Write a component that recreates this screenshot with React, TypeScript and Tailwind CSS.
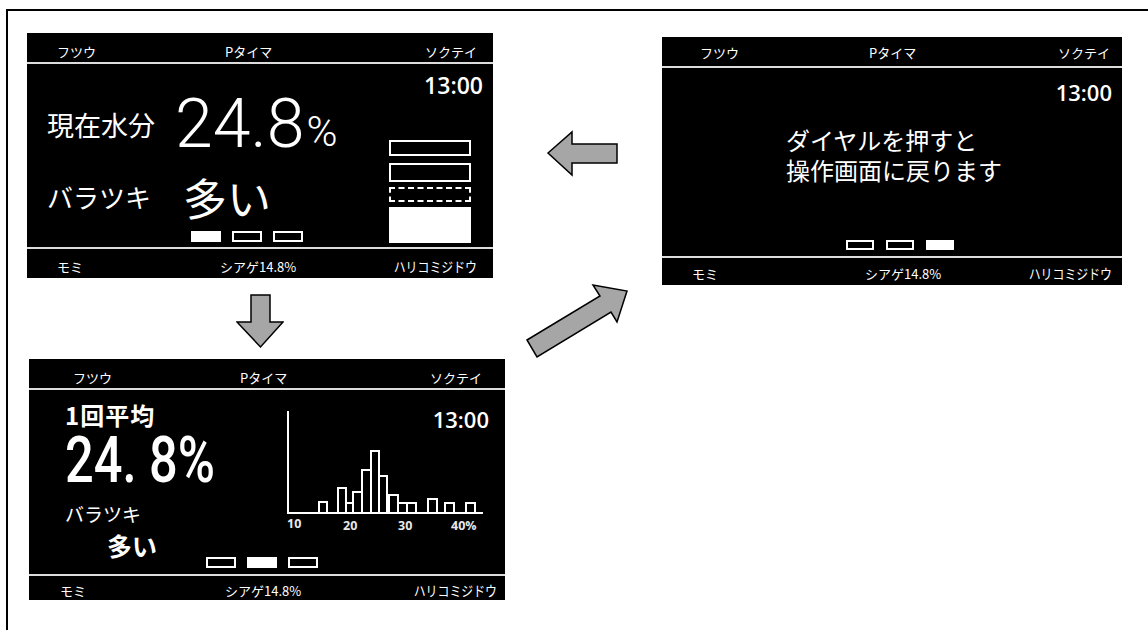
import type { ReactNode } from "react";

const jp = "font-['Noto_Sans_CJK_JP',sans-serif]";

type StripProps = {
  left: ReactNode;
  center: ReactNode;
  right: ReactNode;
  className: string;
  leftClass: string;
};

const Strip = ({ left, center, right, className, leftClass }: StripProps) => (
  <div className={`flex shrink-0 items-start border-[#dcdcdc] text-[13px] leading-[19px] text-white ${className}`}>
    <span className={leftClass}>{left}</span>
    <span>{center}</span>
    <span className="ml-auto">{right}</span>
  </div>
);

// ハリコミジドウ is set in a narrow face on the device
const Narrow = () => <span className="inline-block origin-right scale-x-[0.85] text-[14px]">ハリコミジドウ</span>;

const Boxes = ({ active, box, gap }: { active: number; box: string; gap: string }) => (
  <div className={`flex ${gap}`}>
    {[0, 1, 2].map((i) => (
      <div key={i} className={`${box} border-2 border-white ${i === active ? "bg-white" : ""}`} />
    ))}
  </div>
);

const Panel1 = () => (
  <div className="flex h-[245px] w-[466px] shrink-0 flex-col bg-black text-white">
    <Strip
      className="h-[31px] border-b-2 pl-[30px] pr-[16px] pt-[9px]"
      leftClass="w-[168px]"
      left="フツウ"
      center="Pタイマ"
      right="ソクテイ"
    />
    <div className="flex flex-1">
      <div className="flex flex-1 flex-col pl-[20px] pt-[26px]">
        <div className="flex items-end">
          <span className="mb-[20px] text-[27px] leading-none">現在水分</span>
          <span className="ml-[20px] font-['Roboto',sans-serif] text-[68px] font-light leading-none">24.8</span>
          <span className="mb-[5px] ml-[2px] font-['Roboto',sans-serif] text-[42px] font-light leading-none">%</span>
        </div>
        <div className="mt-[17px] flex items-end">
          <span className="mb-[9px] text-[26px] leading-none">バラツキ</span>
          <span className="ml-[32px] text-[44px] leading-none">多い</span>
        </div>
        <div className="ml-[144px] mt-[12px]">
          <Boxes active={0} box="h-[11px] w-[30px]" gap="gap-[11px]" />
        </div>
      </div>
      <div className="flex flex-col items-end pr-[10px] pt-[10px]">
        <span className="font-['Open_Sans',sans-serif] text-[23px] font-semibold leading-none">13:00</span>
        <div className="mr-[12px] mt-[43px] flex w-[82px] flex-col">
          <div className="h-[16px] border-2 border-white" />
          <div className="mt-[7px] h-[19px] border-2 border-white" />
          <div className="mt-[5px] h-[15px] border-2 border-dashed border-white" />
          <div className="mt-[5px] h-[36px] bg-white" />
        </div>
      </div>
    </div>
    <Strip
      className="h-[31px] border-t-2 pl-[30px] pr-[16px] pt-[8px]"
      leftClass="w-[163px]"
      left="モミ"
      center="シアゲ14.8%"
      right={<Narrow />}
    />
  </div>
);

// [left edge, right edge, top] in chart coordinates, baseline at 108
const bars: [number, number, number][] = [
  [34, 42, 97],
  [53, 61, 83],
  [61, 68, 98],
  [68, 77, 87],
  [77, 86, 65],
  [86, 94, 46],
  [94, 102, 71],
  [104, 113, 90],
  [113, 122, 98],
  [122, 131, 98],
  [143, 152, 94],
  [160, 169, 98],
  [181, 190, 98],
];

const Histogram = () => (
  <svg width="200" height="132" viewBox="0 0 200 132">
    {bars.map(([l, r, t], i) => (
      <rect key={i} x={l} y={t} width={r - l} height={108 - t} fill="none" stroke="#fff" strokeWidth="2" />
    ))}
    <path d="M3 6V108H198" fill="none" stroke="#fff" strokeWidth="2" />
    <g fill="#e8e8e8" fontFamily="Open Sans, sans-serif" fontSize="12.5" fontWeight="700">
      <text x="2" y="123">10</text>
      <text x="58" y="125">20</text>
      <text x="113" y="125">30</text>
      <text x="166" y="125">40%</text>
    </g>
  </svg>
);

const Panel2 = () => (
  <div className="ml-[2px] flex h-[241px] w-[476px] shrink-0 flex-col bg-black text-white">
    <Strip
      className="h-[31px] border-b-2 pl-[44px] pr-[23px] pt-[9px]"
      leftClass="w-[167px]"
      left="フツウ"
      center="Pタイマ"
      right="ソクテイ"
    />
    <div className="flex flex-1">
      <div className="flex w-[256px] shrink-0 flex-col pl-[36px] pt-[13px]">
        <span className="text-[24px] font-bold leading-none tracking-[1px]">1回平均</span>
        <span className="mt-[8px] inline-block origin-left scale-x-[0.79] font-['Roboto',sans-serif] text-[64px] font-medium leading-[52px]">
          24. 8%
        </span>
        <span className="mt-[17px] text-[19px] leading-none">バラツキ</span>
        <div className="flex items-start">
          <span className="ml-[42px] mt-[10px] shrink-0 text-[25px] font-bold leading-none">多い</span>
          <div className="ml-[49px] mt-[34px] shrink-0">
            <Boxes active={1} box="h-[11px] w-[30px]" gap="gap-[11px]" />
          </div>
        </div>
      </div>
      <div className="relative flex-1 pt-[15px]">
        <Histogram />
        <span className="absolute right-[16px] top-[18px] font-['Open_Sans',sans-serif] text-[22px] font-semibold leading-none">
          13:00
        </span>
      </div>
    </div>
    <Strip
      className="h-[26px] border-t-2 pl-[31px] pr-[8px] pt-[5px]"
      leftClass="w-[165px]"
      left="モミ"
      center="シアゲ14.8%"
      right={<Narrow />}
    />
  </div>
);

const Panel3 = () => (
  <div className="flex h-[248px] w-[460px] shrink-0 flex-col bg-black text-white">
    <Strip
      className="h-[31px] border-b-2 pl-[38px] pr-[12px] pt-[6px]"
      leftClass="w-[169px]"
      left="フツウ"
      center="Pタイマ"
      right="ソクテイ"
    />
    <div className="flex flex-1 flex-col">
      <span className="mr-[10px] mt-[13px] self-end font-['Open_Sans',sans-serif] text-[22px] font-semibold leading-none">
        13:00
      </span>
      <div className="ml-[124px] mt-[22px] text-[24px] leading-[30px]">
        <p className="h-[30px]">ダイヤルを押すと</p>
        <p className="h-[30px]">操作画面に戻ります</p>
      </div>
      <div className="ml-[184px] mt-[55px]">
        <Boxes active={2} box="h-[10px] w-[28px]" gap="gap-[12px]" />
      </div>
    </div>
    <Strip
      className="h-[29px] border-t-2 pl-[30px] pr-[10px] pt-[6px]"
      leftClass="w-[173px]"
      left="モミ"
      center="シアゲ14.8%"
      right={<Narrow />}
    />
  </div>
);

const DownArrow = () => (
  <svg className="ml-[209px] shrink-0" width="48" height="81" viewBox="0 0 48 81">
    <polygon
      points="15,17 34,17 34,44 47,44 24.5,69 1,44 15,44"
      fill="#a6a6a6"
      stroke="#000"
      strokeWidth="1.5"
      strokeLinejoin="miter"
    />
  </svg>
);

const MidArrows = () => (
  <svg className="shrink-0" width="157" height="360" viewBox="0 0 157 360">
    <polygon
      points="43,142 67,121 67,133 112,133 112,152 67,152 67,164"
      fill="#a6a6a6"
      stroke="#000"
      strokeWidth="1.5"
    />
    <polygon
      points="22,329 95,285 88,274 122,280 112,311 106,301 32,346"
      fill="#a6a6a6"
      stroke="#000"
      strokeWidth="1.5"
    />
  </svg>
);

export default function App() {
  return (
    <div className={`h-[630px] w-[1148px] overflow-hidden bg-white ${jp}`}>
      <div className="ml-[6px] mt-[9px] flex h-[621px] border-l-2 border-t-2 border-black">
        <div className="flex w-[497px] shrink-0 flex-col pl-[19px] pt-[22px]">
          <Panel1 />
          <DownArrow />
          <Panel2 />
        </div>
        <MidArrows />
        <div className="pt-[26px]">
          <Panel3 />
        </div>
      </div>
    </div>
  );
}
